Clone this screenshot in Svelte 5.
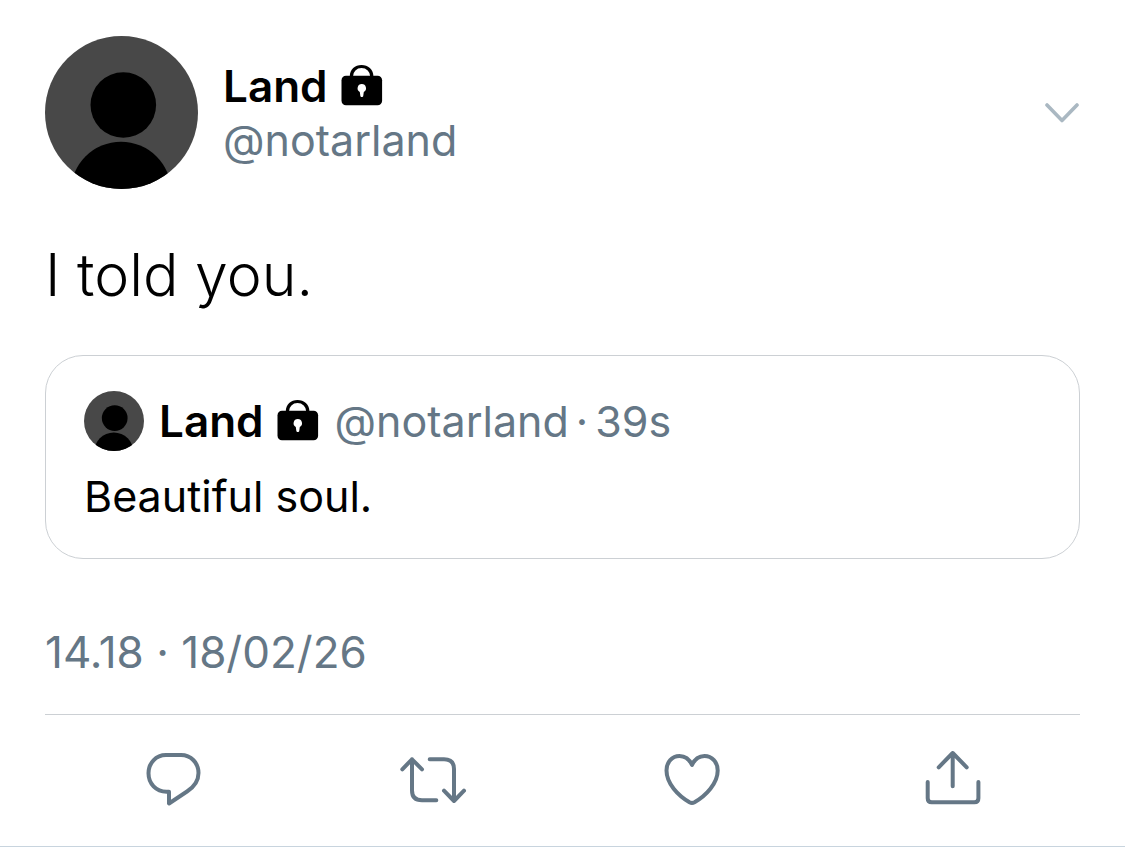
<script lang="ts">
  interface Action {
    label: string;
    paths: string[];
  }

  const author = { name: 'Land', handle: '@notarland' };

  const actions: Action[] = [
    {
      label: 'Reply',
      paths: [
        'M32 15H47C57 15 64.5 23 64.5 33C64.5 41 60 47 53 51.5L35 63.5V51.7H32.5C22 51.7 14.5 43.5 14.5 33.3C14.5 23 22 15 32 15Z'
      ]
    },
    {
      label: 'Retweet',
      paths: [
        'M9.3 29.3L19 19.3L29 29.3M19 19.3V50.5Q19 60.3 29 60.3H43.3',
        'M36.7 19.3H51Q61 19.3 61 29V61M51 50.7L61 61L71 50.7'
      ]
    },
    {
      label: 'Like',
      paths: [
        'M40 25C37.5 19.5 33 16 27.5 16C20 16 14.5 22 14.5 30.5C14.5 43.5 26 55.5 37.5 62.3Q40 63.7 42.5 62.3C54 55.5 65.7 43.5 65.7 30.5C65.7 22 60 16 52.5 16C47 16 42.5 19.5 40 25Z'
      ]
    },
    {
      label: 'Share',
      paths: [
        'M41.7 46.3V13M27.7 27.3L41.7 13L55.7 27.3',
        'M16.7 42V58.3Q16.7 62.3 20.7 62.3H63.4Q67.4 62.3 67.4 58.3V42'
      ]
    }
  ];
</script>

{#snippet avatar()}
  <svg class="avatar" viewBox="0 0 153 153" role="img" aria-label="Profile picture">
    <clipPath id="avatar-clip"><circle cx="76.5" cy="76.5" r="76.5" /></clipPath>
    <g clip-path="url(#avatar-clip)">
      <rect width="153" height="153" fill="#484848" />
      <circle cx="78.3" cy="69" r="32.8" />
      <circle cx="76" cy="156" r="50.3" />
    </g>
  </svg>
{/snippet}

{#snippet lock()}
  <svg class="lock" viewBox="0 0 42 42" role="img" aria-label="Protected account">
    <path d="M9.4 13V11.5C9.4 5.5 13.8 1.5 19.5 1.5S29.8 5.5 29.8 11.5V13" fill="none" stroke="#000" stroke-width="3.2" />
    <rect x="-0.5" y="10.8" width="40.6" height="29.4" rx="4.5" />
    <path d="M19.8 19A4.2 4.2 0 0 0 17.8 26.9L18.4 31.2Q19.8 33 21.2 31.2L21.8 26.9A4.2 4.2 0 0 0 19.8 19Z" fill="#fff" />
  </svg>
{/snippet}

<article class="tweet">
  <header class="tweet-header">
    {@render avatar()}
    <div class="author">
      <div class="name-row"><strong>{author.name}</strong>{@render lock()}</div>
      <div class="muted">{author.handle}</div>
    </div>
    <button type="button" class="more" aria-label="More options">
      <svg viewBox="0 0 36 20"><path d="M3 2L18 17.5L33 2" /></svg>
    </button>
  </header>

  <p class="tweet-text">I told you.</p>

  <section class="quote" aria-label="Quoted tweet">
    <div class="quote-header">
      {@render avatar()}
      <div class="name-row"><strong>{author.name}</strong>{@render lock()}</div>
      <div class="quote-meta muted">
        <span>{author.handle}</span>
        <span>·</span>
        <span>39s</span>
      </div>
    </div>
    <p>Beautiful soul.</p>
  </section>

  <p class="date muted">14.18 · 18/02/26</p>

  <div class="actions">
    {#each actions as action}
      <button type="button" aria-label={action.label}>
        <svg viewBox="0 0 80 80">
          {#each action.paths as d}
            <path {d} />
          {/each}
        </svg>
      </button>
    {/each}
  </div>
</article>

<style>
  :global(body) {
    margin: 0;
    background: #fff;
  }

  .tweet {
    padding: 36px 45px 2px;
    border-bottom: 1px solid #c8d4de;
    color: #000;
    font-family: Inter, 'Liberation Sans', sans-serif;
    font-size: 43px;
    line-height: 54px;
  }

  p {
    margin: 0;
  }

  strong {
    font-size: 44px;
    font-weight: 600;
  }

  svg {
    display: block;
    flex: none;
  }

  button {
    display: flex;
    align-items: center;
    justify-content: center;
    padding: 0;
    border: 0;
    background: none;
    cursor: pointer;
  }

  button path {
    fill: none;
    stroke: #657786;
    stroke-width: 4;
    stroke-linecap: round;
    stroke-linejoin: round;
  }

  .muted {
    color: #657786;
  }

  .tweet-header {
    display: flex;
    align-items: center;
    gap: 25px;
  }

  .avatar {
    width: 153px;
    height: 153px;
  }

  .author {
    flex: 1;
  }

  .name-row {
    display: flex;
    align-items: center;
    gap: 14px;
  }

  .lock {
    width: 42px;
    height: 42px;
    overflow: visible;
  }

  .more svg {
    width: 36px;
    height: 20px;
  }

  .more path {
    stroke: #aab8c2;
    stroke-width: 3.6;
  }

  .tweet-text {
    margin-top: 48px;
    font-size: 59px;
    font-weight: 300;
    line-height: 76px;
  }

  .quote {
    margin-top: 42px;
    padding: 35px 38px;
    border: 1px solid #ccd0d4;
    border-radius: 38px;
  }

  .quote-header {
    display: flex;
    align-items: center;
    gap: 15px;
    margin-bottom: 18px;
  }

  .quote-header .avatar {
    width: 60px;
    height: 60px;
  }

  .quote-meta {
    display: flex;
    gap: 7px;
  }

  .date {
    margin-top: 66px;
    font-size: 44px;
  }

  .actions {
    display: grid;
    grid-template-columns: repeat(4, 1fr);
    margin-top: 35px;
    border-top: 1px solid #ccd0d4;
  }

  .actions button {
    height: 129px;
  }

  .actions svg {
    width: 80px;
    height: 80px;
  }
</style>
